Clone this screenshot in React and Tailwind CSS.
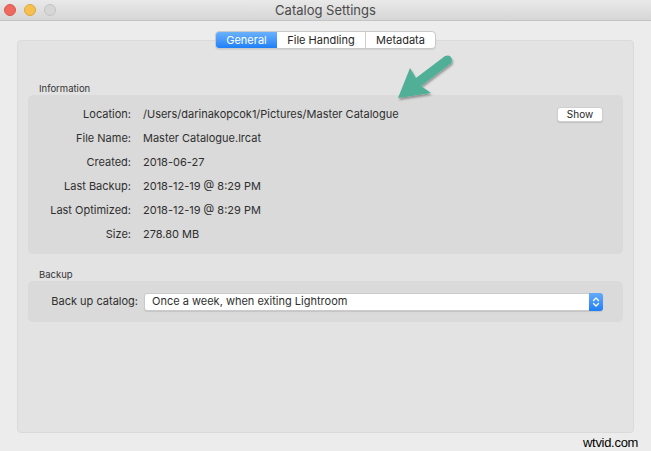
import React from "react";

const rows = [
  ["Location:", "/Users/darinakopcok1/Pictures/Master Catalogue"],
  ["File Name:", "Master Catalogue.lrcat"],
  ["Created:", "2018-06-27"],
  ["Last Backup:", "2018-12-19 @ 8:29 PM"],
  ["Last Optimized:", "2018-12-19 @ 8:29 PM"],
  ["Size:", "278.80 MB"],
];

export default function App() {
  return (
    <div
      className="relative w-[651px] h-[451px] overflow-hidden bg-[#ececec] text-[#2f2f2f]"
      style={{ fontFamily: "Inter, 'Liberation Sans', sans-serif" }}
    >
      {/* Title bar */}
      <div className="relative h-[21px] flex items-center justify-center bg-gradient-to-b from-[#e9e9e9] to-[#d6d6d6] border-b border-[#c4c4c4]">
        <div className="absolute left-[4px] top-[4px] flex gap-[8px]">
          <div className="w-[12px] h-[12px] rounded-full bg-[#ee6a5e] border border-[#d9574c]" />
          <div className="w-[12px] h-[12px] rounded-full bg-[#f5c04f] border border-[#dea93b]" />
          <div className="w-[12px] h-[12px] rounded-full bg-[#d6d6d6] border border-[#c3c3c3]" />
        </div>
        <span className="text-[13px] text-[#4a4a4a] leading-none">Catalog Settings</span>
      </div>

      <div className="px-[17px] pt-[10px]">
        {/* Tabs */}
        <div className="relative z-10 flex justify-center">
          <div className="flex h-[18px] rounded-[4px] border border-[#c9c9c9] bg-white shadow-[0_1px_1px_rgba(0,0,0,0.08)] overflow-hidden text-[11px] leading-none">
            <div className="w-[61px] flex items-center justify-center text-white bg-gradient-to-b from-[#6ab1fb] to-[#1c7ff8]">General</div>
            <div className="w-[89px] flex items-center justify-center border-r border-[#d0d0d0] text-[#262626]">File Handling</div>
            <div className="w-[69px] flex items-center justify-center text-[#262626]">Metadata</div>
          </div>
        </div>

        {/* Panel */}
        <div className="-mt-[9px] h-[393px] rounded-[4px] bg-[#e3e3e3] border border-[#dadada] px-[10px] pt-[41px]">
          <div className="pl-[11px] h-[13px] text-[9.5px] leading-[13px] text-[#333]">Information</div>
          <div className="h-[159px] rounded-[5px] bg-[#dadada] pt-[7px] text-[11px]">
            {rows.map(([k, v], i) => (
              <div key={k} className="flex items-center h-[24px]">
                <div className="w-[104px] text-right pr-[1px]">{k}</div>
                <div className="ml-[11px] flex-1">{v}</div>
                {i === 0 && (
                  <div className="mr-[20px] w-[46px] h-[15px] rounded-[3px] bg-white border border-[#cfcfcf] shadow-[0_1px_1px_rgba(0,0,0,0.12)] flex items-center justify-center text-[10px] leading-none text-[#262626]">
                    Show
                  </div>
                )}
              </div>
            ))}
          </div>

          <div className="mt-[14px] pl-[11px] h-[13px] text-[9.5px] leading-[13px] text-[#333]">Backup</div>
          <div className="h-[41px] rounded-[5px] bg-[#dadada] flex items-center text-[11px]">
            <div className="w-[110px] text-right">Back up catalog:</div>
            <div className="ml-[6px] mr-[20px] flex-1 h-[18px] flex rounded-[3px] bg-white border border-[#cbcbcb] shadow-[0_1px_1px_rgba(0,0,0,0.1)]">
              <div className="flex-1 flex items-center pl-[7px] text-[#2f2f2f]">Once a week, when exiting Lightroom</div>
              <div className="w-[14px] -my-[1px] -mr-[1px] rounded-r-[3px] bg-gradient-to-b from-[#64acfa] to-[#1b7ef6] flex items-center justify-center">
                <svg width="8" height="12" viewBox="0 0 8 12" fill="none" stroke="white" strokeWidth="1.3" strokeLinecap="round" strokeLinejoin="round">
                  <path d="M1.5 4.5 L4 2 L6.5 4.5" />
                  <path d="M1.5 7.5 L4 10 L6.5 7.5" />
                </svg>
              </div>
            </div>
          </div>
        </div>
      </div>

      {/* Arrow annotation */}
      <svg className="absolute left-[390px] top-[50px]" width="70" height="60" viewBox="390 50 70 60">
        <defs>
          <filter id="sh" x="-20%" y="-20%" width="140%" height="140%">
            <feDropShadow dx="1" dy="2" stdDeviation="1.2" floodColor="#000" floodOpacity="0.35" />
          </filter>
        </defs>
        <g filter="url(#sh)" fill="#4fb097">
          <path d="M398 98 L410 68 L416 78 L445 56 Q451 54 452 60 Q452 63 450 64 L421 86 L431 93 Z" />
        </g>
      </svg>

      {/* Watermark */}
      <div
        className="absolute left-[583px] top-[436px] text-[13px] leading-none text-black tracking-[-0.3px]"
        style={{ fontFamily: "'Liberation Sans', Arial, sans-serif" }}
      >
        wtvid.com
      </div>
    </div>
  );
}
